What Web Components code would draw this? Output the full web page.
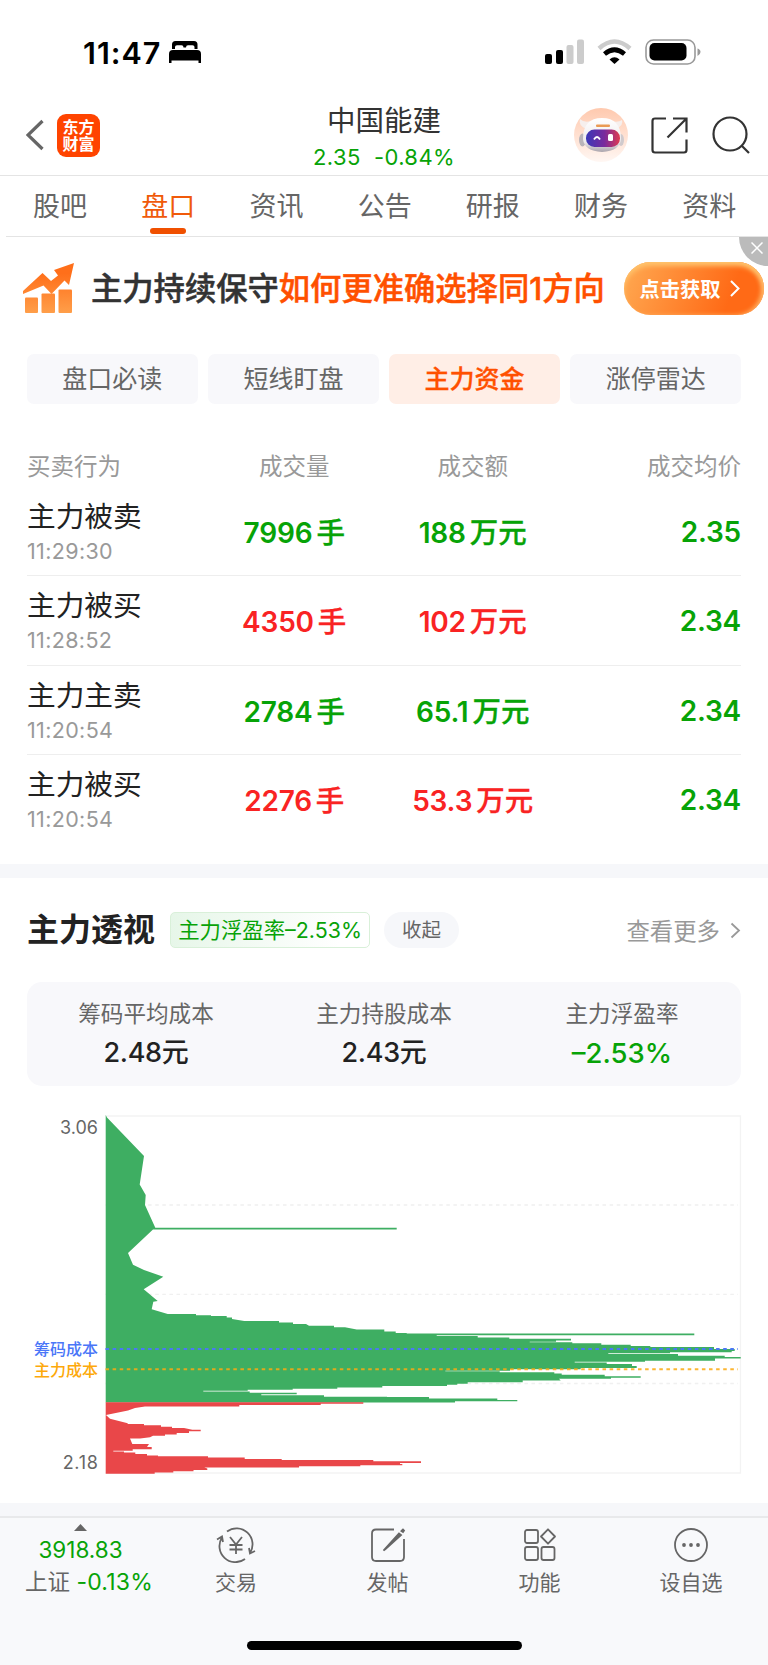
<!DOCTYPE html>
<html lang="zh-CN">
<head>
<meta charset="utf-8">
<meta name="viewport" content="width=device-width, initial-scale=1">
<title>中国能建</title>
<style>
    body {
        margin: 0;
        background: #fff;
        color: #222;
        font-family: Inter, "Noto Sans CJK SC", sans-serif;
        --up: #f92323;
        --down: #07a307;
        --accent: #ff5000;
        --panel: #f8f8fb;
    }
</style>
</head>
<body>
<stock-page></stock-page>

<script>
const define = (name, html) => {
    customElements.define(name, class extends HTMLElement {
        connectedCallback() {
            if (this.shadowRoot) return;
            this.attachShadow({ mode: 'open' });
            this.shadowRoot.innerHTML = html;
        }
    });
};

define('status-bar', `
    <style>
        :host {
            display: flex;
            align-items: center;
            height: 102px;
            padding: 2px 67px 0 83px;
            box-sizing: border-box;
            color: #000;
        }
        .time { font-size: 30.5px; font-weight: 600; letter-spacing: 1px; }
        .bed { margin-left: 7px; }
        .signal { margin-left: auto; }
        svg { display: block; }
    </style>
    <span class="time">11:47</span>
    <svg class="bed" width="34" height="24" viewBox="0 0 34 24">
        <path d="M4 9V4.500Q4 1 7.500 1H26Q29.500 1 29.500 4.500V9H26.500V7Q26.500 5.200 24.500 5.200H20Q18 5.200 18 7.500H15.500Q15.500 5.200 13.500 5.200H9Q7 5.200 7 7V9Z"/>
        <path d="M1 23V14Q1 10 5 10H29Q33 10 33 14V23H30.500V20.500H3.500V23Z"/>
    </svg>
    <svg class="signal" width="156" height="26" viewBox="0 0 156 26">
        <rect x="0" y="15" width="7" height="10" rx="2"/>
        <rect x="11" y="11" width="7" height="14" rx="2"/>
        <g fill="#ccc">
            <rect x="21.500" y="6" width="7" height="19" rx="2"/>
            <rect x="32" y="0.500" width="7" height="24.500" rx="2"/>
        </g>
        <path d="M54 9.500Q69.500 -4.500 85 9.500" fill="none" stroke="#ccc" stroke-width="4.500"/>
        <path d="M59.500 15Q69.500 6.500 79.500 15" fill="none" stroke="#000" stroke-width="4.600"/>
        <path d="M64.500 20.500Q69.500 16 74.500 20.500L69.500 25Z"/>
        <rect x="101" y="1" width="49" height="24" rx="7.500" fill="none" stroke="#999" stroke-width="1.600"/>
        <rect x="104.500" y="4" width="37" height="17.500" rx="5"/>
        <path d="M152.500 9.500Q155.500 10.500 155.500 13T152.500 17Z" fill="#999"/>
    </svg>
`);

define('stock-header', `
    <style>
        :host {
            display: grid;
            grid-template-columns: 1fr auto 1fr;
            align-items: center;
            height: 74px;
            padding: 0 18px 0 26px;
            box-sizing: border-box;
            border-bottom: 1px solid #e4e4e4;
        }
        .left, .right { display: flex; align-items: center; padding-bottom: 7px; }
        .right { justify-content: flex-end; }
        .logo {
            width: 43px;
            height: 43px;
            margin-left: 13px;
            box-sizing: border-box;
            padding: 4px 5px 0;
            border-radius: 9px;
            background: #ff4400;
            color: #fff;
            font: 700 16px/17.500px "Noto Sans CJK SC", sans-serif;
            text-align: center;
        }
        .middle { text-align: center; margin-left: -8px; }
        .name { height: 37px; font-size: 28.500px; line-height: 33px; color: #333; }
        .quote {
            height: 32px;
            font-size: 22px;
            line-height: 33px;
            color: var(--down);
            white-space: pre;
            letter-spacing: 0.4px;
        }
        svg { display: block; }
        .share { margin-left: 23px; }
        .search { margin-left: 24px; }
    </style>
    <div class="left">
        <svg width="18" height="32" viewBox="0 0 18 32"><path d="M16.500 2L2 16L16.500 30" fill="none" stroke="#666" stroke-width="3.200"/></svg>
        <div class="logo">东方财富</div>
    </div>
    <div class="middle">
        <div class="name"><slot name="name"></slot></div>
        <div class="quote"><slot name="quote"></slot></div>
    </div>
    <div class="right">
        <svg width="54" height="54" viewBox="0 0 54 54">
            <defs>
                <linearGradient id="halo" x2="0" y2="1"><stop stop-color="#ffc9ae"/><stop offset="1" stop-color="#fff7f3"/></linearGradient>
                <linearGradient id="visor"><stop stop-color="#3b38b8"/><stop offset="0.550" stop-color="#7a2a9c"/><stop offset="1" stop-color="#e03a50"/></linearGradient>
                <linearGradient id="shell" x2="0" y2="1"><stop stop-color="#fff"/><stop offset="0.700" stop-color="#eeebed"/><stop offset="1" stop-color="#aaa4ac"/></linearGradient>
            </defs>
            <circle cx="27" cy="27" r="27" fill="url(#halo)"/>
            <path d="M12 21Q4 17 6 11Q10 15 17 13ZM42 21Q50 17 48 12Q44 15 37 13Z" fill="#f6efed"/>
            <ellipse cx="8.500" cy="32" rx="3.500" ry="6.500" fill="#b9b4b9"/>
            <ellipse cx="47" cy="32" rx="3" ry="6" fill="#d0cacd"/>
            <path d="M9 31Q9 10 28 10Q47 10 47 31Q46 43 28 44Q10 43 9 31Z" fill="url(#shell)"/>
            <rect x="22" y="16.500" width="14" height="2.500" rx="1" fill="#ea9b55"/>
            <rect x="12" y="21.500" width="34" height="17.500" rx="8.500" fill="url(#visor)"/>
            <path d="M20 31.500Q23 26.500 26 31.500" fill="none" stroke="#fff" stroke-width="1.800"/>
            <rect x="34" y="26" width="5" height="7" rx="1.500" fill="#fff"/>
        </svg>
        <svg class="share" width="37" height="37" viewBox="0 0 37 37" fill="none" stroke="#333" stroke-width="2.200">
            <path d="M15 1.500H4Q1.500 1.500 1.500 4V33Q1.500 35.500 4 35.500H33Q35.500 35.500 35.500 33V22.500M22 1.500H35.500V15.500M35.500 1.500L16.500 20.500"/>
        </svg>
        <svg class="search" width="38" height="38" viewBox="0 0 38 38" fill="none" stroke="#333" stroke-width="2.200">
            <circle cx="18" cy="18" r="16.500"/><path d="M29.500 29.500L37 37"/>
        </svg>
    </div>
`);

define('tab-item', `
    <style>
        :host {
            display: flex;
            flex-direction: column;
            align-items: center;
            width: 108.200px;
            color: #666;
        }
        .label { height: 52px; font-size: 27px; line-height: 62px; }
        .mark { width: 36px; height: 6px; border-radius: 3px; }
        :host([active]) { color: #f05a0a; }
        :host([active]) .mark { background: #f05000; }
    </style>
    <span class="label"><slot></slot></span>
    <span class="mark"></span>
`);

define('tab-bar', `
    <style>
        :host {
            display: flex;
            height: 61px;
            margin-left: 6px;
            box-sizing: border-box;
            border-bottom: 1px solid #e4e4e4;
        }
    </style>
    <slot></slot>
`);

define('promo-banner', `
    <style>
        :host {
            display: flex;
            align-items: center;
            position: relative;
            height: 103px;
            padding: 0 4px 0 22px;
            box-sizing: border-box;
            overflow: hidden;
        }
        .text {
            margin-left: 16px;
            padding-bottom: 4px;
            font-size: 31.300px;
            font-weight: 500;
            -webkit-text-stroke: 0.500px;
            white-space: nowrap;
            color: #333;
        }
        .text b { font-weight: 500; color: var(--accent); }
        .go {
            display: flex;
            align-items: center;
            justify-content: center;
            gap: 9px;
            width: 140px;
            height: 53px;
            margin-left: auto;
            padding: 0 9px 1px 0;
            box-sizing: border-box;
            border-radius: 27px;
            background: linear-gradient(110deg, #ffa14a 10%, #ff6a16 75%);
            box-shadow: inset 0 4px 5px #ffc36c, inset -3px 0 4px #ffa85a;
            color: #fff;
            font-size: 20.300px;
            font-weight: 700;
        }
        .close {
            position: absolute;
            top: -29px;
            right: -29px;
            width: 58px;
            height: 58px;
            border-radius: 50%;
            background: #bbb;
        }
        .close svg { position: absolute; left: 12px; top: 34px; }
    </style>
    <svg width="53" height="52" viewBox="0 0 53 52">
        <defs><linearGradient id="rise" gradientUnits="userSpaceOnUse" x1="0" y1="0" x2="0" y2="52"><stop offset="0.200" stop-color="#ff6f1a"/><stop offset="1" stop-color="#ffa14c"/></linearGradient></defs>
        <g fill="url(#rise)">
            <path d="M1 31V28L20.500 10L29 18L36 12.500L32 7L52 0L47 22L42.500 17.500L29.500 31L21.500 22.500Z"/>
            <rect x="3" y="34.500" width="13" height="15.500" rx="1"/>
            <rect x="19.500" y="30.500" width="13.500" height="19.500" rx="1"/>
            <rect x="36.500" y="26.500" width="13.500" height="23.500" rx="1"/>
        </g>
    </svg>
    <span class="text">主力持续保守<b>如何更准确选择同1方向</b></span>
    <span class="go">点击获取
        <svg width="10" height="17" viewBox="0 0 10 17"><path d="M1 1L8.500 8.500L1 16" fill="none" stroke="#fff" stroke-width="2"/></svg>
    </span>
    <span class="close"><svg width="12" height="12" viewBox="0 0 12 12"><path d="M0.500 0.500L11.500 11.500M11.500 0.500L0.500 11.500" stroke="#fff" stroke-width="1.500"/></svg></span>
`);

define('filter-chip', `
    <style>
        :host {
            flex: 1;
            height: 50px;
            border-radius: 7px;
            background: var(--panel);
            color: #666;
            font-size: 25px;
            line-height: 51px;
            text-align: center;
        }
        :host([active]) {
            background: #ffeee6;
            color: var(--accent);
            font-weight: 500;
            -webkit-text-stroke: 0.300px;
        }
    </style>
    <slot></slot>
`);

define('chip-row', `
    <style>
        :host { display: flex; gap: 10.500px; padding: 14px 27px 0; }
    </style>
    <slot></slot>
`);

define('trade-table', `
    <style>
        :host { display: block; padding: 45px 27px 0; }
        .head {
            display: grid;
            grid-template-columns: 178px 178.500px 178.500px 1fr;
            height: 38px;
            color: #999;
            font-size: 23.500px;
            line-height: 36px;
            text-align: center;
        }
        .head :first-child { text-align: left; }
        .head :last-child { text-align: right; }
    </style>
    <div class="head"><span>买卖行为</span><span>成交量</span><span>成交额</span><span>成交均价</span></div>
    <slot></slot>
`);

customElements.define('trade-row', class extends HTMLElement {
    connectedCallback() {
        const { name, time, volume, amount, unit, price, side } = this.dataset;
        this.attachShadow({ mode: 'open' });
        this.shadowRoot.innerHTML = `
            <style>
                :host {
                    display: grid;
                    grid-template-columns: 178px 178.500px 178.500px 1fr;
                    height: 89.330px;
                    box-sizing: border-box;
                    border-bottom: 1px solid #eee;
                    font-size: 28px;
                    font-weight: 600;
                    text-align: center;
                }
                :host(:last-of-type) { border-bottom: none; }
                .who { text-align: left; font-weight: 400; }
                .name { height: 47px; font-size: 28.700px; line-height: 59px; }
                .time { color: #999; font-size: 21.500px; letter-spacing: 0.350px; line-height: 35px; }
                .value { line-height: 91px; color: var(--${side}); white-space: nowrap; letter-spacing: -0.200px; }
                .value i { margin-left: 4px; font-size: 28.500px; font-style: normal; font-weight: 500; letter-spacing: 0; -webkit-text-stroke: 0.300px; }
                .price { line-height: 91px; text-align: right; color: var(--down); letter-spacing: -0.200px; }
            </style>
            <div class="who"><div class="name">${name}</div><div class="time">${time}</div></div>
            <span class="value">${volume}<i>手</i></span>
            <span class="value">${amount}<i>${unit}</i></span>
            <span class="price">${price}</span>
        `;
    }
});

define('section-head', `
    <style>
        :host {
            display: flex;
            align-items: center;
            height: 104px;
            box-sizing: border-box;
            padding: 0 27px;
        }
        h2 { margin: 0; font-size: 32px; font-weight: 700; line-height: 40px; }
        .tag {
            width: 200px;
            height: 36px;
            margin-left: 15px;
            box-sizing: border-box;
            border: 1px solid #d9f0d9;
            border-radius: 5px;
            background: linear-gradient(100deg, #e6f6e8, #fff 85%);
            color: var(--down);
            font-size: 21.400px;
            line-height: 34px;
            text-align: center;
            white-space: nowrap;
        }
        .fold {
            width: 75px;
            height: 36px;
            margin-left: 14px;
            border-radius: 18px;
            background: #f6f7fa;
            color: #666;
            font-size: 19.500px;
            line-height: 36px;
            text-align: center;
        }
        .more { margin-left: auto; color: #999; font-size: 23.400px; }
        svg { margin-left: 10px; }
    </style>
    <h2>主力透视</h2>
    <span class="tag">主力浮盈率–2.53%</span>
    <span class="fold">收起</span>
    <span class="more">查看更多</span>
    <svg width="11" height="17" viewBox="0 0 11 17"><path d="M1.500 1.500L9 8.500L1.500 15.500" fill="none" stroke="#999" stroke-width="1.800"/></svg>
`);

define('cost-item', `
    <style>
        :host { display: block; flex: 1; text-align: center; }
        .label { height: 44px; color: #666; font-size: 22.600px; line-height: 63px; }
        .value { font-size: 27px; font-weight: 500; line-height: 54px; letter-spacing: -0.300px; color: #222; }
        :host([down]) .value { font-size: 27.500px; letter-spacing: 0; color: var(--down); }
    </style>
    <div class="label"><slot name="label"></slot></div>
    <div class="value"><slot></slot></div>
`);

define('cost-card', `
    <style>
        :host {
            display: flex;
            height: 104px;
            margin: 0 27px;
            border-radius: 15px;
            background: var(--panel);
        }
    </style>
    <slot></slot>
`);

define('chip-chart', `
    <style>
        :host { display: block; height: 417px; }
        svg { display: block; }
        text { text-anchor: end; }
        .price { fill: #666; font-size: 18px; }
        .low { letter-spacing: 0.700px; }
        .cost { font-size: 16px; font-weight: 500; }
    </style>
    <svg width="768" height="417" viewBox="0 1086 768 417">
        <path d="M105.500 1116H740.500V1473H105.500" fill="none" stroke="#f3f3f3" stroke-width="1.300"/>
        <path d="M105.500 1205H738M105.500 1294.300H738M105.500 1383.500H738" stroke="#f0f0f0" stroke-width="1.300" stroke-dasharray="3.550"/>
        <path fill="#3eae62" d="M105.700 1115L107 1117.500L144 1156L139.700 1184.500L145.700 1195L145 1205L155.300 1227.800H396.700V1229.600H153L128 1253L133 1264.700L144 1270L163.300 1276.700L143.700 1289.300L157.700 1301L153.300 1301.700L151.700 1309.300L167.700 1314H196V1315.300H211V1316H226.700V1317.500H232V1319L244.300 1321H279V1322.500H293V1324H306L309 1325.700H334V1327.300H345L356.700 1329.500H384.300V1331.500H395.700V1333H406.700V1333.400H694.300V1335.300H436.700V1336H477.700V1337.500H509.300V1338.700H571V1340.500H556V1341.700H529.700V1342.300H572.300V1343.300H601.300V1344.700H630.700V1346H650.300V1347H714V1349H734.700V1351H731.700V1352.300H670V1353.300H608.300V1354H678V1355.700H724.700V1357H740.700V1358.500H715V1360.700H645V1361.700H574.700V1362.500H606.700V1364H632V1366H636.700V1368H580.700V1369.300H510V1370.700H445.300V1371.300H499.700V1372.300H554.300V1373.500H561.700V1374.700H604.700V1376.300H640.700V1377.700H611V1378.700H559L560.700 1380.500H522.700V1382.300H467.700V1383.700H457.300V1384.700H447V1386H382.300V1387.500H337.300V1388.700H292.700V1389.700H247.700V1390.700H203.300V1391.400H249.700V1392.700H296.700V1394.300H261.300V1395.200H324V1396.700H387V1397H429V1398.500H497.300V1400H517.300V1401.300H455V1402.500H105.700Z"/>
        <path fill="#e94749" d="M105.700 1402.300H363.300V1403.800H320.700V1405H239.300V1406.500H145L135 1408L128 1410.500L106 1415L110 1418.700L127.700 1423.300V1424H144V1425.300H161V1426.700H172V1428H184L192.300 1429.700H200.700V1431.300H189V1433H176.700V1434.500H165V1435.700H153L150 1437.300L140 1438.500H130L132.300 1444H149L147 1447H151.700V1449.300H132.700V1450.700H113.300V1451.500H124V1452.500H135.300V1454H147V1455.500H158V1456.300H208V1457.500H244.700V1459H281.700V1460H373.300V1461.200H421V1463H400V1464H402.300V1465.300H360.300V1466.300H299V1467.500H204.300L207.300 1468.500V1470H193.500V1471.300H173.300V1472.500H154.700V1473.700H105.700Z"/>
        <path d="M105.500 1349H738" stroke="#4978f5" stroke-width="2" stroke-dasharray="3.550"/>
        <path d="M105.500 1369.300H738" stroke="#fca90f" stroke-opacity="0.850" stroke-width="2" stroke-dasharray="3.550"/>
        <text class="price" x="98" y="1133.500">3.06</text>
        <text class="price low" x="98.500" y="1469">2.18</text>
        <text class="cost" x="98" y="1355" fill="#4a76f8">筹码成本</text>
        <text class="cost" x="98" y="1375.500" fill="#fda90b">主力成本</text>
    </svg>
`);

define('nav-item', `
    <style>
        :host {
            display: flex;
            flex-direction: column;
            align-items: center;
            color: #666;
            font-size: 21px;
            line-height: 30px;
        }
        ::slotted(svg) {
            display: block;
            width: 40px;
            height: 36px;
            margin: 9px 0 5px;
            fill: none;
            stroke: #666;
            stroke-width: 1.800;
        }
    </style>
    <slot name="icon"></slot>
    <span><slot></slot></span>
`);

define('bottom-nav', `
    <style>
        :host {
            display: grid;
            grid-template-rows: 1fr auto;
            height: 149px;
            box-sizing: border-box;
            border-top: 2px solid #e8e9eb;
            background: #f8f9fb;
        }
        .row { display: grid; grid-template-columns: 160px 152px 151px 153px 150px; }
        .index {
            display: flex;
            flex-direction: column;
            align-items: center;
            width: 161px;
            padding-top: 6px;
            color: #666;
            font-size: 22.500px;
            line-height: 32px;
            white-space: nowrap;
        }
        .index svg { display: block; margin-bottom: 3px; }
        .index b { font-weight: 400; font-size: 22.500px; color: var(--down); }
        .index span { padding-left: 17px; }
        .index span b { font-size: 23px; letter-spacing: 0.200px; }
        .home {
            width: 275px;
            height: 9px;
            margin: 0 auto 15px;
            border-radius: 5px;
            background: #000;
        }
    </style>
    <div class="row">
        <div class="index">
            <svg width="13" height="7" viewBox="0 0 13 7"><path d="M0 7L6.500 0L13 7Z" fill="#666"/></svg>
            <b>3918.83</b>
            <span>上证 <b>-0.13%</b></span>
        </div>
        <slot></slot>
    </div>
    <div class="home"></div>
`);

define('stock-page', `
    <style>
        :host { display: block; width: 768px; height: 1665px; overflow: hidden; }
        .band { height: 14px; background: #f6f7fa; }
        .band.thin { height: 13px; }
        trade-table { height: 415px; }
    </style>
    <status-bar></status-bar>
    <stock-header>
        <span slot="name">中国能建</span>
        <span slot="quote">2.35  -0.84%</span>
    </stock-header>
    <tab-bar>
        <tab-item>股吧</tab-item>
        <tab-item active>盘口</tab-item>
        <tab-item>资讯</tab-item>
        <tab-item>公告</tab-item>
        <tab-item>研报</tab-item>
        <tab-item>财务</tab-item>
        <tab-item>资料</tab-item>
    </tab-bar>
    <promo-banner></promo-banner>
    <chip-row>
        <filter-chip>盘口必读</filter-chip>
        <filter-chip>短线盯盘</filter-chip>
        <filter-chip active>主力资金</filter-chip>
        <filter-chip>涨停雷达</filter-chip>
    </chip-row>
    <trade-table>
        <trade-row data-name="主力被卖" data-time="11:29:30" data-volume="7996" data-amount="188" data-unit="万元" data-price="2.35" data-side="down"></trade-row>
        <trade-row data-name="主力被买" data-time="11:28:52" data-volume="4350" data-amount="102" data-unit="万元" data-price="2.34" data-side="up"></trade-row>
        <trade-row data-name="主力主卖" data-time="11:20:54" data-volume="2784" data-amount="65.1" data-unit="万元" data-price="2.34" data-side="down"></trade-row>
        <trade-row data-name="主力被买" data-time="11:20:54" data-volume="2276" data-amount="53.3" data-unit="万元" data-price="2.34" data-side="up"></trade-row>
    </trade-table>
    <div class="band"></div>
    <section-head></section-head>
    <cost-card>
        <cost-item><span slot="label">筹码平均成本</span>2.48元</cost-item>
        <cost-item><span slot="label">主力持股成本</span>2.43元</cost-item>
        <cost-item down><span slot="label">主力浮盈率</span>–2.53%</cost-item>
    </cost-card>
    <chip-chart></chip-chart>
    <div class="band thin"></div>
    <bottom-nav>
        <nav-item>
            <svg slot="icon" viewBox="0 0 40 36"><path d="M11 4.500A16 16 0 0 1 34 26M39 24L34 26.500L33 21M29 32A16 16 0 0 1 6 10.500M1 12.500L6 9.500L7 15M14 10L20 17.500L26 10M20 17.500V27M13.500 18H26.500M13.500 22.500H26.500"/></svg>
            交易
        </nav-item>
        <nav-item>
            <svg slot="icon" viewBox="0 0 40 36"><path d="M26 2.500H8Q4 2.500 4 6.500V30Q4 34 8 34H32Q36 34 36 30V12"/><path d="M15.500 23.500L31 6.500L33 8L17.500 22ZM33.500 4L35 2.500L36 3.500L35 5Z" fill="#666"/></svg>
            发帖
        </nav-item>
        <nav-item>
            <svg slot="icon" viewBox="0 0 40 36"><rect x="5" y="3" width="13" height="13" rx="2"/><rect x="5" y="20" width="13" height="13" rx="2"/><rect x="21.500" y="20" width="13" height="13" rx="2"/><path d="M28 2.300L35 9.500L28 16.700L21 9.500Z" stroke-linejoin="round"/></svg>
            功能
        </nav-item>
        <nav-item>
            <svg slot="icon" viewBox="0 0 40 36"><circle cx="20" cy="18" r="16"/><g fill="#666" stroke="none"><circle cx="13" cy="18" r="1.900"/><circle cx="20" cy="18" r="1.900"/><circle cx="27" cy="18" r="1.900"/></g></svg>
            设自选
        </nav-item>
    </bottom-nav>
`);
</script>
</body>
</html>
